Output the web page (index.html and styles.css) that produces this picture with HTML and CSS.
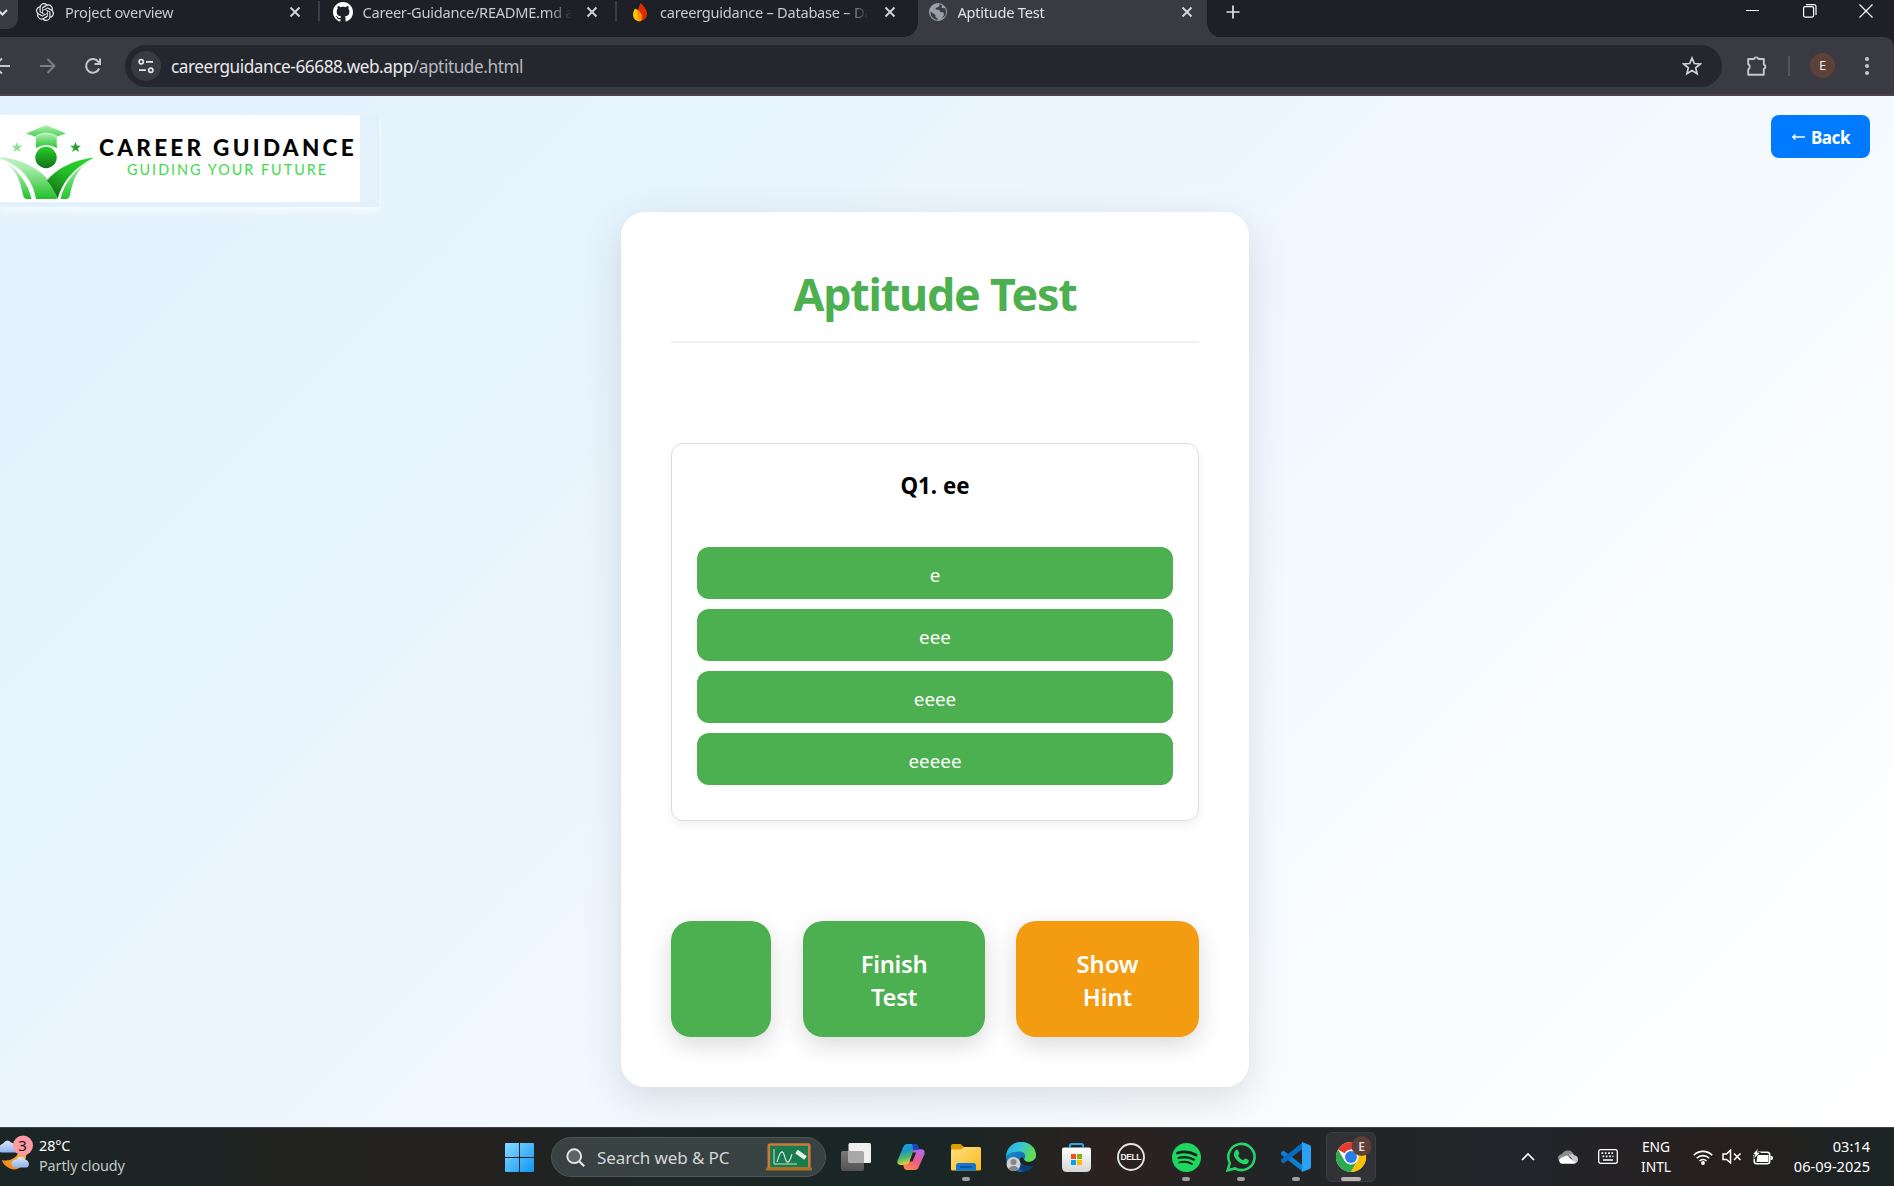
FILE: index.html
```
<!DOCTYPE html>
<html lang="en">
<head>
<meta charset="utf-8">
<title>Aptitude Test</title>
<link rel="stylesheet" href="styles.css">
</head>
<body>
<svg class="defs" width="0" height="0">
  <defs>
    <symbol id="close" viewBox="0 0 12 12"><path d="M1.5 1.5l9 9M10.5 1.5l-9 9" fill="none" stroke="currentColor" stroke-width="1.8"/></symbol>
    <linearGradient id="gl" x1="0" y1="0" x2="0" y2="1"><stop offset="0" stop-color="#b9f2bc"/><stop offset=".25" stop-color="#a9ecad"/><stop offset="1" stop-color="#22c02a"/></linearGradient>
    <linearGradient id="gr" x1=".8" y1="0" x2=".2" y2="1"><stop offset="0" stop-color="#27d82c"/><stop offset=".45" stop-color="#22bd27"/><stop offset="1" stop-color="#146b18"/></linearGradient>
    <linearGradient id="gh" x1="0" y1="0" x2="0" y2="1"><stop offset="0" stop-color="#b9f2bc"/><stop offset="1" stop-color="#25c42d"/></linearGradient>
    <linearGradient id="gd" x1="0" y1="0" x2="0" y2="1"><stop offset="0" stop-color="#25cf2b"/><stop offset="1" stop-color="#14701a"/></linearGradient>
    <linearGradient id="gt" x1="0" y1="1" x2="1" y2="0"><stop offset="0" stop-color="#2bbb32"/><stop offset="1" stop-color="#18851d"/></linearGradient>
    <linearGradient id="win" x1="0" y1="0" x2="1" y2="1"><stop offset="0" stop-color="#86dcff"/><stop offset="1" stop-color="#0d95f5"/></linearGradient>
    <linearGradient id="fold" x1="0" y1="0" x2="1" y2="1"><stop offset="0" stop-color="#ffe083"/><stop offset="1" stop-color="#fbb91c"/></linearGradient>
    <linearGradient id="edgeA" x1="0" y1="0" x2="1" y2=".3"><stop offset="0" stop-color="#2aa7e6"/><stop offset=".5" stop-color="#35c5d5"/><stop offset="1" stop-color="#63dc4d"/></linearGradient>
    <linearGradient id="edgeB" x1="0" y1="0" x2="1" y2="1"><stop offset="0" stop-color="#1b9de2"/><stop offset="1" stop-color="#0b4a8f"/></linearGradient>
    <linearGradient id="copA" x1="0" y1="0" x2=".3" y2="1"><stop offset="0" stop-color="#1fa4e8"/><stop offset=".4" stop-color="#1c95c9"/><stop offset=".7" stop-color="#4fba6b"/><stop offset="1" stop-color="#f0cf2e"/></linearGradient>
    <linearGradient id="copB" x1=".8" y1="0" x2=".2" y2="1"><stop offset="0" stop-color="#b069f0"/><stop offset=".5" stop-color="#ec5a8c"/><stop offset="1" stop-color="#fd8a45"/></linearGradient>
    <linearGradient id="store" x1="0" y1="0" x2="0" y2="1"><stop offset="0" stop-color="#fff"/><stop offset="1" stop-color="#d6d6d6"/></linearGradient>
    <linearGradient id="cld" x1="0" y1="0" x2="0" y2="1"><stop offset="0" stop-color="#dbe9ff"/><stop offset="1" stop-color="#8fb2ee"/></linearGradient>
    <linearGradient id="moon" x1="0" y1="1" x2="1" y2="0"><stop offset="0" stop-color="#ee7f16"/><stop offset="1" stop-color="#ffbe3b"/></linearGradient>
    <linearGradient id="tv" x1="0" y1="0" x2="0" y2="1"><stop offset="0" stop-color="#7b7b7b"/><stop offset="1" stop-color="#525252"/></linearGradient>
  </defs>
</svg>

<header class="tabstrip">
  <div class="tab-search"><svg width="10" height="8" viewBox="0 0 10 8"><path d="M-1 2l3.500 3.500L7 1" fill="none" stroke="#e3e3e6" stroke-width="2"/></svg></div>
  <div class="tab">
    <svg class="fav" viewBox="0 0 24 24"><path fill="#ececee" d="M22.2819 9.8211a5.9847 5.9847 0 0 0-.5157-4.9108 6.0462 6.0462 0 0 0-6.5098-2.9A6.0651 6.0651 0 0 0 4.9807 4.1818a5.9847 5.9847 0 0 0-3.9977 2.9 6.0462 6.0462 0 0 0 .7427 7.0966 5.98 5.98 0 0 0 .511 4.9107 6.051 6.051 0 0 0 6.5146 2.9001A5.9847 5.9847 0 0 0 13.2599 24a6.0557 6.0557 0 0 0 5.7718-4.2058 5.9894 5.9894 0 0 0 3.9977-2.9001 6.0557 6.0557 0 0 0-.7475-7.0729zm-9.022 12.6081a4.4755 4.4755 0 0 1-2.8764-1.0408l.1419-.0804 4.7783-2.7582a.7948.7948 0 0 0 .3927-.6813v-6.7369l2.02 1.1686a.071.071 0 0 1 .038.052v5.5826a4.504 4.504 0 0 1-4.4945 4.4944zm-9.6607-4.1254a4.4708 4.4708 0 0 1-.5346-3.0137l.142.0852 4.783 2.7582a.7712.7712 0 0 0 .7806 0l5.8428-3.3685v2.3324a.0804.0804 0 0 1-.0332.0615L9.74 19.9502a4.4992 4.4992 0 0 1-6.1408-1.6464zM2.3408 7.8956a4.485 4.485 0 0 1 2.3655-1.9728V11.6a.7664.7664 0 0 0 .3879.6765l5.8144 3.3543-2.0201 1.1685a.0757.0757 0 0 1-.071 0l-4.8303-2.7865A4.504 4.504 0 0 1 2.3408 7.872zm16.5963 3.8558L13.1038 8.364 15.1192 7.2a.0757.0757 0 0 1 .071 0l4.8303 2.7913a4.4944 4.4944 0 0 1-.6765 8.1042v-5.6772a.79.79 0 0 0-.407-.667zm2.0107-3.0231l-.142-.0852-4.7735-2.7818a.7759.7759 0 0 0-.7854 0L9.409 9.2297V6.8974a.0662.0662 0 0 1 .0284-.0615l4.8303-2.7866a4.4992 4.4992 0 0 1 6.6802 4.66zM8.3065 12.863l-2.02-1.1638a.0804.0804 0 0 1-.038-.0567V6.0742a4.4992 4.4992 0 0 1 7.3757-3.4537l-.142.0805L8.704 5.459a.7948.7948 0 0 0-.3927.6813zm1.0976-2.3654l2.602-1.4998 2.6069 1.4998v2.9994l-2.5974 1.4997-2.6067-1.4997Z"/></svg>
    <span class="tab-title">Project overview</span>
    <svg class="x"><use href="#close"/></svg>
  </div>
  <div class="tab sep">
    <svg class="fav" viewBox="0 0 16 16"><path fill="#fff" d="M8 0C3.580 0 0 3.580 0 8c0 3.540 2.290 6.530 5.470 7.590.4.070.55-.17.55-.38v-1.490c-2.010.37-2.530-.49-2.690-.94-.09-.23-.48-.94-.82-1.130-.28-.15-.68-.52-.01-.53.63-.01 1.080.58 1.230.82.72 1.210 1.870.87 2.330.66.07-.52.28-.87.51-1.070-1.780-.2-3.640-.89-3.640-3.950 0-.87.31-1.590.82-2.150-.08-.2-.36-1.020.08-2.120 0 0 .67-.21 2.200.82.64-.18 1.320-.27 2-.27s1.360.09 2 .27c1.530-1.040 2.200-.82 2.200-.82.44 1.100.16 1.920.08 2.120.51.56.82 1.270.82 2.150 0 3.070-1.870 3.750-3.650 3.950.29.25.54.73.54 1.480v2.200c0 .21.15.46.55.38A8 8 0 0 0 16 8c0-4.420-3.580-8-8-8z"/></svg>
    <span class="tab-title">Career-Guidance/README.md at main</span>
    <svg class="x"><use href="#close"/></svg>
  </div>
  <div class="tab sep">
    <svg class="fav" viewBox="0 0 20 20"><path fill="#dd2c00" d="M10.500 .8c3 3.200 6.500 6.700 6.500 11.200a7 7 0 0 1-7 7.200C6.300 19.200 7 12 8 8c.6-2.600 1.800-4.800 2.500-7.200z"/><path fill="#ffc400" d="M5 6.500c3.500 1.600 6.800 5 7 8.500.1 2-.6 3.700-2 4.300-4 0-7-2.800-7-6.600C3 10.200 4 8.300 5 6.500z"/><path fill="#ff9100" d="M8 8.500c2.200 1.800 4 4 4 6.500 0 2-.8 3.600-2 4.200-3-2-3.500-6.500-2-10.700z"/></svg>
    <span class="tab-title">careerguidance – Database – Data</span>
    <svg class="x"><use href="#close"/></svg>
  </div>
  <div class="tab active">
    <svg class="fav" viewBox="0 0 20 20"><circle cx="10" cy="10" r="9" fill="#9aa0a9"/><path fill="#3b3c43" d="M2.500 9.500l5 3.500v2l2 1.500v1.800A8 8 0 0 1 2.500 9.500zM8 3l3-1 .6 1.800-2 1.700-2 .3v1.700l3.400.2 1.500 2.300 3 .6.5 2.500-2.500 3.500 3-2A8 8 0 0 0 17 6l-2 .3-1.500-.8.500-2.300L11 1.900z"/></svg>
    <span class="tab-title">Aptitude Test</span>
    <svg class="x"><use href="#close"/></svg>
  </div>
  <svg class="plus" viewBox="0 0 14 14"><path d="M7 .5v13M.5 7h13" stroke="#dfe0e3" stroke-width="1.700"/></svg>
  <div class="window-controls">
    <svg width="14" height="14" viewBox="0 0 14 14"><path d="M0 6.500h13" stroke="#fff"/></svg>
    <svg width="14" height="14" viewBox="0 0 14 14" fill="none" stroke="#fff" stroke-width="1.200"><rect x=".6" y="2.600" width="10" height="10.500" rx="1.500"/><path d="M3 .6h8a2 2 0 0 1 2 2v8.500"/></svg>
    <svg width="14" height="14" viewBox="0 0 14 14"><path d="M.5 .5l13 13M13.500 .5l-13 13" stroke="#fff" stroke-width="1.200"/></svg>
  </div>
</header>

<nav class="toolbar">
  <svg class="nav-back" viewBox="0 0 10 18" fill="none" stroke="#c7c8cd" stroke-width="1.900"><path d="M10 9H-6M2 1.500L-6 9l8 7.500"/></svg>
  <svg class="nav-fwd" viewBox="0 0 16 18" fill="none" stroke="#7e7f86" stroke-width="1.900"><path d="M0 9h14.500M7.500 2l7 7-7 7"/></svg>
  <svg class="nav-reload" viewBox="0 0 18 18" fill="none" stroke="#c7c8cd" stroke-width="2"><path d="M15.200 11.500A6.800 6.800 0 1 1 14.500 5L16 7M16 1.500V7h-5.500"/></svg>
  <div class="omnibox">
    <div class="site-info"><svg width="16" height="16" viewBox="0 0 16 16" fill="none" stroke="#e3e3e6" stroke-width="1.700"><circle cx="3.200" cy="3.800" r="2.100"/><path d="M8 3.800h7M1 12.200h7"/><circle cx="12.800" cy="12.200" r="2.100"/></svg></div>
    <span class="url">careerguidance-66688.web.app<span class="path">/aptitude.html</span></span>
    <svg class="star" viewBox="0 0 20 20"><path d="M10 2l2.300 5.500 6 .5-4.600 3.900 1.400 5.800L10 14.600l-5.100 3.100 1.400-5.800L1.700 8l6-.5z" fill="none" stroke="#d0d1d6" stroke-width="1.700"/></svg>
  </div>
  <svg class="puzzle" viewBox="0 0 22 22"><path d="M2.200 4h5.800a2.300 2.300 0 0 1 4.400 0h5.400v5.500a2.300 2.300 0 0 1 0 4.400v5.900H2.200v-5.300a3 3 0 0 0 0-5.300z" fill="none" stroke="#c5c6d0" stroke-width="1.900" stroke-linejoin="round"/></svg>
  <i class="divider"></i>
  <span class="profile">E</span>
  <svg class="dots" viewBox="0 0 6 18" fill="#c7c8cd"><circle cx="3" cy="2" r="2"/><circle cx="3" cy="9" r="2"/><circle cx="3" cy="16" r="2"/></svg>
</nav>

<main class="page">
  <div class="page-header">
    <div class="logo-frame">
      <div class="logo">
        <svg class="logo-mark" width="96" height="87" viewBox="0 0 96 87">
          <path d="M46 10L66 18.500 46 25 26 18.500z" fill="url(#gh)"/>
          <path d="M36 20Q46 15 57 20V33Q46 27 36 33z" fill="url(#gh)"/>
          <path d="M35.500 31V24C36 17 56.500 17 57 24V31" fill="none" stroke="#d9f7db" stroke-width=".7"/>
          <circle cx="46" cy="42.500" r="10.700" fill="url(#gd)"/>
          <path d="M17 27l1.400 3.700 4 .1-3.200 2.400 1.200 3.800-3.400-2.300-3.400 2.300 1.200-3.800-3.200-2.400 4-.1z" fill="#8fe095"/>
          <path d="M75.500 27l1.400 3.700 4 .1-3.200 2.400 1.200 3.800-3.400-2.300-3.400 2.300 1.200-3.800-3.200-2.400 4-.1z" fill="url(#gt)"/>
          <path d="M-4 42C25 43 52 58 57 84H36C33 66 22 50 -4 42z" fill="url(#gl)"/>
          <path d="M7 48C20 57 28 69 31.500 84H27Q24 84 23 80C20 66 17 57 7 48z" fill="url(#gl)"/>
          <path d="M94 42.500C73 45 56 54 47 65.500Q54 74 57.500 84C62 68 73 53 94 42.500z" fill="url(#gr)"/>
          <path d="M94 43.500C75 54 65 66 60.500 84H66Q69 84 70 80C74 62 78 52 94 43.500z" fill="url(#gh)"/>
        </svg>
        <div class="logo-text">
          <div class="logo-name">CAREER GUIDANCE</div>
          <div class="logo-tag">GUIDING YOUR FUTURE</div>
        </div>
      </div>
    </div>
    <button class="back-btn"><svg width="15" height="10" viewBox="0 0 15 10" fill="none" stroke="#fff" stroke-width="1.300"><path d="M1.500 5H14M4.500 2.500L1.700 5l2.800 2.500"/></svg>Back</button>
  </div>

  <section class="card">
    <h1>Aptitude Test</h1>
    <div class="question">
      <h2>Q1. ee</h2>
      <button class="option">e</button>
      <button class="option">eee</button>
      <button class="option">eeee</button>
      <button class="option">eeeee</button>
    </div>
    <div class="actions">
      <button class="action blank"></button>
      <button class="action finish">Finish<br>Test</button>
      <button class="action hint">Show<br>Hint</button>
    </div>
  </section>
</main>

<footer class="taskbar">
  <div class="weather">
    <svg width="34" height="36" viewBox="0 0 34 36">
      <path d="M3 18.500Q1 18.500 0 17V12.500Q2 10 4 9.500 8 4 12 8.500 16 9 17 13V18.500z" fill="url(#cld)"/>
      <path d="M27 16C28.500 28 23 35.500 14 35.500Q6 34 2.500 26C11 28 19 24 20.500 15z" fill="url(#moon)"/>
      <path d="M16 33.500a4 4 0 0 1-1-7.600q2-.4 2.500 0c1-4 7-4.500 8.500-.5 4 .5 5.500 6 2 8.100z" fill="url(#cld)"/>
      <circle cx="24" cy="11.500" r="10" fill="#ff9aa5"/>
      <text x="23.600" y="16.500" class="badge-num">3</text>
    </svg>
    <div class="weather-text"><div class="temp">28°C</div><div class="sky">Partly cloudy</div></div>
  </div>
  <div class="app"><svg width="29" height="29" viewBox="0 0 29 29" fill="url(#win)"><path d="M0 1q0-1 1-1h13v14H0zM15 0h13q1 0 1 1v13H15zM0 15h14v14H1q-1 0-1-1zM15 15h14v13q0 1-1 1H15z"/></svg></div>
  <div class="search">
    <svg width="19" height="19" viewBox="0 0 19 19"><circle cx="8.200" cy="8.200" r="6.900" fill="#5d6667" stroke="#e6e8e8" stroke-width="1.900"/><path d="M13.200 13.200l5 5" stroke="#e6e8e8" stroke-width="2.200"/></svg>
    <span>Search web &amp; PC</span>
    <svg width="46" height="28" viewBox="0 0 46 28"><rect x="2.800" y="1.500" width="40.500" height="24" rx="1" fill="#187c4f" stroke="#c87b3d" stroke-width="2.600"/><rect x="0" y="24.500" width="46" height="3" rx="1" fill="#b0701f"/><path d="M8 6v15h23" fill="none" stroke="#c8e0d2" stroke-width="1"/><path d="M11 19C15 5 17 8 18.500 13 20.500 21 23 22 26 11" fill="none" stroke="#dcebe2" stroke-width="1.100"/><path d="M30.500 8.500l9 6.500" stroke="#eceeee" stroke-width="4.500"/></svg>
  </div>
  <div class="app"><svg width="30" height="28" viewBox="0 0 30 28"><rect y="8" width="23" height="20" rx="2" fill="url(#tv)"/><rect x="7.500" width="22.500" height="20" rx="1.500" fill="#efefef"/><path d="M7.500 8H21.500q1.500 0 1.500 1.500V20H9q-1.500 0-1.500-1.500z" fill="#a9a9a9"/></svg></div>
  <div class="app"><svg width="30" height="28" viewBox="0 0 30 28"><path d="M7.500 3.500Q8.500 1 11 1h8q2.500 0 3.300 3l.7 3h-3.500q-2 0-2.700 2.500L14 18q-1 4-4.500 4H5Q.5 22 1.500 17.500z" fill="url(#copA)"/><path d="M22.500 24.500Q21.500 27 19 27h-8q-2.500 0-3.300-3L7.200 21.800h2.300q3.200 0 4.500-4l2.500-8.500q1-3 4.500-3H25q4.500 0 3.500 5z" fill="url(#copB)"/><path d="M16 1h3q2.500 0 3.300 3l.7 3h-3.500q-1.200 0-2 1z" fill="#1d44c4"/><path d="M16.800 9.500h3.400L16.500 18.500h-2.800z" fill="#1c2625"/></svg></div>
  <div class="app run"><svg width="30" height="28" viewBox="0 0 30 28"><path d="M0 3Q0 1 2 1h7.500l4 3.500V9H0z" fill="#e19b06"/><path d="M0 8q0-1.500 1.500-1.500H10L13 4h15.500Q30 4 30 5.500V26q0 1.500-1.500 1.500h-27Q0 27.500 0 26z" fill="url(#fold)"/><path d="M5 27.500V22.500q0-2.500 2.500-2.500h15q2.500 0 2.500 2.500v5z" fill="#1277d1"/><path d="M9 24h12" stroke="#0b4d93" stroke-width="1.500"/></svg></div>
  <div class="app"><svg width="30" height="30" viewBox="0 0 30 30"><circle cx="15" cy="15" r="15" fill="url(#edgeB)"/><path d="M0 14C1 5 8 0 15 0c9 0 15 6 15 13 0 5-4 7-7.500 7-3.500 0-5.500-1.500-4-3.500 2-3 0-7-5-7C8 9.500 2 11 0 14z" fill="url(#edgeA)"/><path d="M12 15c-1 5 3 10 10 9.500 3 0 4.500-1.500 6-1.500-1.500 3-4.500 5.500-9 6.500-6-1-9-8-7-14.500z" fill="#0d3a78"/><path d="M22.500 20Q27 20 29.500 16L32 22l-4.500 1.500Q24 24.500 20 24q-5-1-6.500-5.500 0-2 2-3.500 2 0 2.500 2.500Q19.500 20 22.500 20z" fill="#1c2423"/><circle cx="7.500" cy="22" r="7" fill="#d0d0d0"/><circle cx="7.500" cy="20" r="3" fill="#85858a"/><path d="M2.500 26.500q5-5.500 10 0-5 5-10 0z" fill="#85858a"/></svg></div>
  <div class="app"><svg width="29" height="29" viewBox="0 0 29 29"><path d="M8 7V2.500Q8 1 9.500 1h10Q21 1 21 2.500V7" fill="none" stroke="#22aeea" stroke-width="2"/><path d="M0 6.500Q0 4.500 2 4.500h25q2 0 2 2V24q0 5-5 5H5q-5 0-5-5z" fill="url(#store)"/><path d="M8 5V1.500M21 5V1.500" stroke="#22aeea" stroke-width="1.600"/><path d="M9 11h5v5H9z" fill="#f25022"/><path d="M15 11h5v5h-5z" fill="#7fba00"/><path d="M9 17h5v5H9z" fill="#00a4ef"/><path d="M15 17h5v5h-5z" fill="#ffb900"/></svg></div>
  <div class="app"><svg width="28" height="28" viewBox="0 0 28 28"><circle cx="14" cy="14" r="13" fill="none" stroke="#e4e4e4" stroke-width="1.900"/><text x="13.800" y="17.300" class="dell">DELL</text></svg></div>
  <div class="app run"><svg width="29" height="29" viewBox="0 0 29 29"><circle cx="14.500" cy="14.500" r="14.500" fill="#1ed760"/><g fill="none" stroke="#15211a" stroke-linecap="round"><path d="M5.500 10Q15 7 24 12" stroke-width="2.700"/><path d="M6.500 15Q14.500 12.500 22 16.700" stroke-width="2.200"/><path d="M7.300 19.500Q14 17.500 20 21" stroke-width="1.800"/></g></svg></div>
  <div class="app run"><svg width="30" height="30" viewBox="0 0 30 30"><path d="M1.700 28.300L3.800 21A13.100 13.100 0 1 1 9 26.400z" fill="none" stroke="#25d366" stroke-width="2.600"/><path d="M10 8q1.500-1 2.200.5l1.200 2.800q.2.700-1.300 2.400c1.200 2.300 3 3.700 5.200 4.600 1.400-1.700 1.700-2.100 2.500-1.700l2.700 1.300q.8.500.2 2.100c-1 2.300-3.800 2.900-6.500 1.800C12 20 9.500 17 8.300 14.500 7.300 12 8 9.500 10 8z" fill="#25d366"/></svg></div>
  <div class="app run"><svg width="30" height="30" viewBox="0 0 30 30"><path d="M0 10.500L2.500 8.500 22 23.500V30L0 12.500q-1-1 0-2z" fill="#0f7fd0"/><path d="M0 19.500L2.500 21.500 22 6.500V0L0 17.500q-1 1 0 2z" fill="#0b6bbd"/><path d="M21 0l7.500 3Q30 3.700 30 5v20q0 1.300-1.500 2L21 30z" fill="#2aa1f2"/></svg></div>
  <div class="app run current"><svg width="42" height="42" viewBox="0 0 42 42"><g transform="translate(6 6)"><circle cx="15" cy="15" r="15" fill="#fff"/><path d="M15 15L2 7.500A15 15 0 0 1 28 7.500H15z" fill="#e33b2e"/><path d="M2 7.500A15 15 0 0 0 15 30L21.500 18.700 15 15 8.500 18.700z" fill="#2da94f"/><path d="M28 7.500A15 15 0 0 1 15 30L21.500 18.700 15 7.500z" fill="#fdbd00"/><circle cx="15" cy="15" r="7.500" fill="#fff"/><circle cx="15" cy="15" r="6" fill="#2b7de9"/></g><circle cx="31.500" cy="10" r="10" fill="#5d4037"/><text x="31.500" y="14.500" class="chrome-e">E</text></svg></div>

  <div class="tray">
    <svg width="14" height="9" viewBox="0 0 14 9"><path d="M1 8l6-6 6 6" fill="none" stroke="#fff" stroke-width="1.700"/></svg>
    <svg class="g-cloud" width="20" height="14" viewBox="0 0 20 14"><path d="M2 11Q0 10 0 7.500 .5 4.500 4 4 6 0 10.500 .5q4 .3 5 4L10 9z" fill="#8c8d90"/><path d="M11 4.500q5-1.500 5.500 1 3.500.3 3.500 4 0 3.500-3.500 3.500z" fill="#c9cacb"/><path d="M1 10Q3 7.500 5 7l4-1.500 9 7.500q-1 .7-2 .7H4Q1.500 13.500 1 10z" fill="#fff"/></svg>
    <svg class="g-kb" width="20" height="15" viewBox="0 0 20 15"><rect x=".7" y=".7" width="18.600" height="13.600" rx="2" fill="none" stroke="#fff" stroke-width="1.300"/><path d="M3.500 4.200h13M4.500 7.400h11" stroke="#fff" stroke-width="1.700" stroke-dasharray="1.700 1.600"/><path d="M5 11h10" stroke="#fff" stroke-width="1.500"/></svg>
    <div class="lang"><div>ENG</div><div class="intl">INTL</div></div>
    <svg class="g-wifi" width="20" height="16" viewBox="0 0 20 16"><g fill="none" stroke="#fff" stroke-width="1.600"><path d="M.8 6.200a13 13 0 0 1 18.400 0M3.700 9.200a9 9 0 0 1 12.600 0M6.500 12a5 5 0 0 1 7 0"/></g><circle cx="10" cy="14" r="1.900" fill="#fff"/></svg>
    <svg class="g-mute" width="20" height="15" viewBox="0 0 20 15" fill="none" stroke="#fff" stroke-width="1.500"><path d="M1 5h3.500L8.500 1.200v12.600L4.500 10.500H1zM12 4.500l6.500 6.500M18.500 4.500L12 11"/></svg>
    <svg class="g-bat" width="20" height="17" viewBox="0 0 20 17"><rect x="1.200" y="4.200" width="15.500" height="11.600" rx="2.500" fill="none" stroke="#fff" stroke-width="1.500"/><path d="M17.500 8h1q1.500 0 1.500 2t-1.500 2h-1z" fill="#fff"/><path d="M4.500 7h11v7h-12z" fill="#fff"/><path d="M5 .3L-.5 6.500H2L.8 11 7.500 4.500H4.700z" fill="#fff" stroke="#241f1d" stroke-width=".8"/></svg>
    <div class="clock"><div class="time">03:14</div><div class="date">06-09-2025</div></div>
  </div>
</footer>
</body>
</html>
```
FILE: styles.css
```
* { box-sizing: border-box; }
body {
  margin: 0;
  width: 1894px;
  height: 1186px;
  overflow: hidden;
  display: flex;
  flex-direction: column;
  font-family: "Noto Sans", "Open Sans", sans-serif;
  background: #1d2027;
}
svg { display: block; flex: none; }
button { border: 0; padding: 0; font: inherit; color: #fff; }
.defs { position: absolute; }

/* Tab strip */
.tabstrip { height: 37px; flex: none; display: flex; background: #1d2027; }
.tab-search {
  width: 18px; height: 29px; margin-right: 3px; padding-top: 9px;
  background: #3a3b42; border-radius: 0 0 11px 0; flex: none;
}
.tab { position: relative; width: 297.5px; height: 37px; padding: 0 18px 13px 14px; display: flex; align-items: center; flex: none; }
.tab.sep::before { content: ""; position: absolute; left: -1px; top: 1px; width: 2px; height: 20px; background: #3d3e45; }
.fav { width: 20px; height: 20px; margin-right: 10px; }
.tab:nth-of-type(2) .fav { width: 18px; height: 18px; margin: 0 11px 0 1px; }
.tab-title {
  width: 210px; font-size: 14.6px; letter-spacing: -0.25px; line-height: 24px; color: #c9cad0;
  white-space: nowrap; overflow: hidden;
  -webkit-mask-image: linear-gradient(90deg, #000 185px, transparent 209px);
  mask-image: linear-gradient(90deg, #000 185px, transparent 209px);
}
.x { width: 12px; height: 12px; margin-left: auto; color: #d6d7db; }
.active .tab-title { color: #e2e2e5; }
.tab.active { z-index: 0; }
.tab.active::before {
  content: ""; position: absolute; z-index: -1; left: 4px; right: 4px; top: -10px; bottom: 0;
  background: #3a3b42; border-radius: 12px 12px 0 0;
}
.tab.active::after {
  content: ""; position: absolute; z-index: -1; left: -10px; right: -11px; bottom: 0; height: 14px;
  background:
    radial-gradient(circle at 0 0, transparent 13.5px, #3a3b42 14px) left / 14px 14px no-repeat,
    radial-gradient(circle at 100% 0, transparent 14.500px, #3a3b42 15px) right / 15px 14px no-repeat;
}
.plus { width: 14px; height: 14px; margin: 5px 0 0 15px; }
.window-controls { display: flex; margin-left: auto; padding: 4px 21px 0 0; gap: 42.5px; }

/* Toolbar */
.toolbar {
  height: 59px; flex: none; display: flex; align-items: center; padding-right: 24px;
  background: #3a3b42; border-bottom: 2px solid #4b4347; border-top-right-radius: 10px;
}
.nav-back { width: 10px; height: 18px; }
.nav-fwd { width: 16px; height: 18px; margin-left: 30px; }
.nav-reload { width: 18px; height: 18px; margin-left: 28px; }
.omnibox {
  width: 1597px; height: 42px; margin-left: 23px; padding: 0 20px 0 6px; border-radius: 21px;
  display: flex; align-items: center; background: #25272e;
}
.site-info { width: 30px; height: 30px; border-radius: 50%; background: #3a3b42; display: grid; place-items: center; }
.url { margin-left: 10px; padding-top: 2px; font-size: 17.2px; letter-spacing: -0.43px; line-height: 26px; color: #e9e9ec; }
.path { color: #b9bac0; }
.star { width: 20px; height: 20px; margin-left: auto; }
.puzzle { width: 22px; height: 22px; margin-left: 24px; }
.divider { width: 2px; height: 20px; margin-left: 20px; background: #54555c; }
.profile {
  width: 25px; height: 25px; margin-left: 20px; border-radius: 50%; background: #5d4037;
  color: #f0ebea; font-size: 13px; line-height: 25px; text-align: center;
}
.dots { width: 6px; height: 18px; margin-left: auto; }

/* Page */
.page {
  height: 1031px; flex: none; overflow: hidden;
  background: linear-gradient(135deg, #e2f1fc 0%, #e6f4fd 25%, #f0f7ff 50%, #f8fcff 75%, #ffffff 100%);
}
.page-header { height: 116px; padding: 19px 24px 0 0; display: flex; justify-content: space-between; align-items: flex-start; }
.logo-frame { width: 379px; height: 92px; background: #e3f1fd; box-shadow: 0 4px 8px rgba(255, 255, 255, .8); }
.logo { width: 360px; height: 87px; display: flex; background: #fff; }
.logo-text { padding: 20px 0 0 3px; white-space: nowrap; }
.logo-name { font: 900 22.500px/26px Lato, sans-serif; letter-spacing: 3.3px; color: #050505; }
.logo-tag { margin: 0 0 0 28px; font: 400 14.400px/17px Lato, sans-serif; letter-spacing: 2px; color: #3ddb48; }
.back-btn {
  width: 99px; height: 43px; border-radius: 8px; background: #007bff; padding: 1px 0 0 0;
  display: flex; align-items: center; justify-content: center; gap: 5px;
  font-size: 17px; font-weight: 700; letter-spacing: -0.45px;
}
.card {
  width: 628px; height: 875px; margin-left: 621px; padding: 52px 50px 0; border-radius: 24px;
  background: #fff; box-shadow: 0 12px 40px rgba(0, 0, 0, .12);
}
h1 {
  margin: 0 0 100px; padding-bottom: 17px; border-bottom: 2px solid #f0f0f0; text-align: center;
  font-size: 44.800px; line-height: 60px; letter-spacing: -1.2px; color: #4caf50;
}
.question {
  height: 378px; padding: 28px 25px 0; border: 1px solid #ddd; border-radius: 12px;
  display: flex; flex-direction: column; gap: 10px; box-shadow: 0 4px 10px rgba(0, 0, 0, .06);
}
h2 { margin: 0 0 37px; font-size: 22.300px; line-height: 28px; text-align: center; color: #000; }
.option { height: 52px; flex: none; padding-top: 4px; border-radius: 12px; background: #4caf50; font-size: 18.800px; }
.actions { display: flex; margin-top: 100px; height: 116px; }
.action {
  padding-top: 3px; border-radius: 20px; background: #4caf50; box-shadow: 0 8px 24px rgba(0, 0, 0, .15);
  font-size: 23.800px; font-weight: 600; line-height: 33px; letter-spacing: -0.3px;
}
.blank { width: 100px; }
.finish { width: 182px; margin-left: 32px; }
.hint { width: 183px; margin-left: auto; background: #f39c12; letter-spacing: 0; }

/* Taskbar */
.taskbar {
  height: 59px; flex: none; display: flex; align-items: center; color: #fff;
  border-top: 1px solid #3b4443; padding: 0 24px 0 0;
  background: linear-gradient(90deg, #1c2526 0, #1d2524 200px, #22221f 290px, #22211f 490px, #1b2625 640px, #1a2625 950px, #2b2220 1110px, #232426 1250px, #23252a 1540px, #271f1d 1730px, #1a2526 1894px);
}
.weather { width: 492px; display: flex; align-items: center; }
.weather > svg { margin: -11px 0 0 -1px; }
.badge-num { font: 15px "Noto Sans", sans-serif; text-anchor: middle; fill: #201010; }
.weather-text { margin-left: 6px; font-size: 14.4px; line-height: 20px; letter-spacing: -0.1px; padding-bottom: 2px; }
.sky { color: #c3c8c8; }
.app { position: relative; width: 55px; height: 50px; flex: none; display: grid; place-items: center; }
.app.run::after { content: ""; position: absolute; bottom: 1px; left: 23.500px; width: 8px; height: 4px; border-radius: 2px; background: #9d9fa0; }
.app.current { width: 50px; margin-left: 2.500px; border-radius: 6px; background: #313235; border: 1px solid #3c3d40; }
.app.current::after { left: 14px; bottom: 0; width: 20px; background: #b9b4b4; }
.search {
  width: 275px; height: 40px; margin: 0 2.500px 0 4px; padding: 0 13px 0 14px; border-radius: 20px; flex: none;
  display: flex; align-items: center; background: #384242; border: 1px solid #4d5756;
}
.search span { margin-left: 12px; padding-top: 1px; font-size: 17px; letter-spacing: -0.1px; line-height: 24px; color: #d3d7d7; }
.search svg:last-child { margin-left: auto; }
.dell { font: 700 8.500px "Liberation Sans", sans-serif; letter-spacing: -0.4px; text-anchor: middle; fill: #f0f0f0; }
.chrome-e { font: 600 12px "Noto Sans", sans-serif; text-anchor: middle; fill: #ddd; }
.tray { margin-left: auto; display: flex; align-items: center; font-size: 14.600px; line-height: 20px; padding-bottom: 1px; }
.g-cloud { margin-left: 23px; }
.g-kb { margin-left: 20px; }
.lang { width: 30px; margin-left: 23px; text-align: center; font-size: 13.800px; }
.g-wifi { margin-left: 22px; }
.g-mute { margin-left: 9px; }
.g-bat { margin-left: 11px; }
.clock { width: 77px; margin-left: 20px; text-align: right; white-space: nowrap; padding-bottom: 1px; }
```
